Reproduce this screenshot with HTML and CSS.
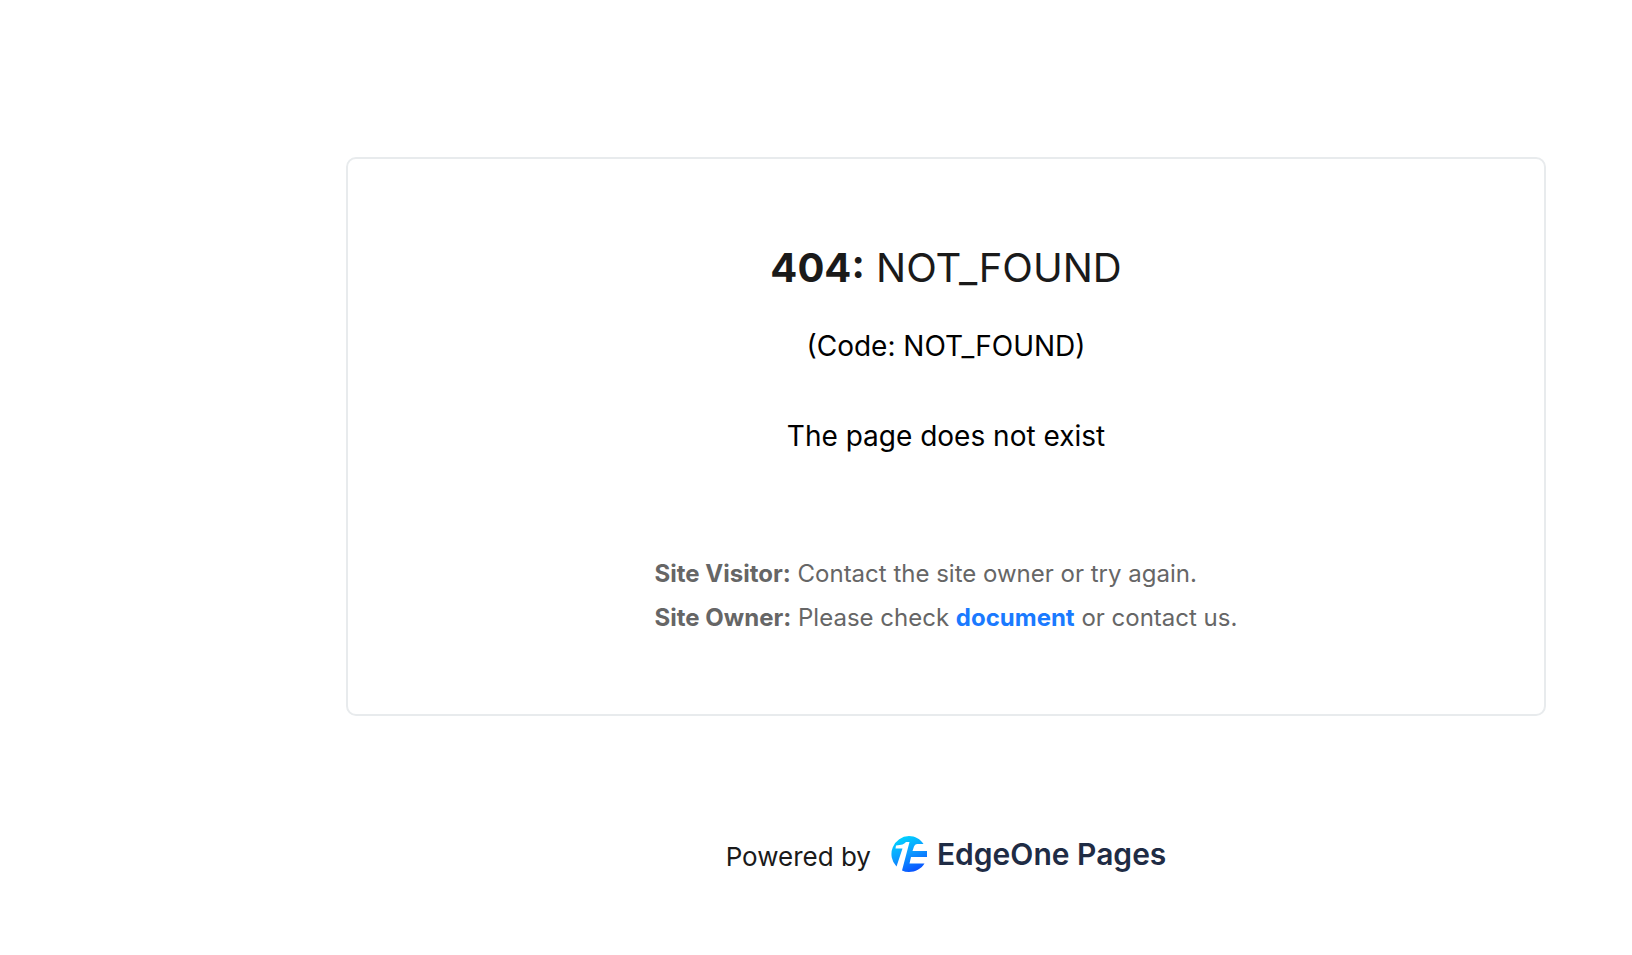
FILE: index.html
```html
<!DOCTYPE html>
<html lang="en">
<head>
<meta charset="utf-8">
<meta name="viewport" content="width=device-width, initial-scale=1">
<title>404: NOT_FOUND</title>
<link rel="stylesheet" href="styles.css">
</head>
<body>
<main class="card">
  <h1 class="title"><strong>404:</strong> NOT_FOUND</h1>
  <p class="code">(Code: NOT_FOUND)</p>
  <p class="message">The page does not exist</p>
  <div class="hints">
    <p class="hint"><strong>Site Visitor:</strong> Contact the site owner or try again.</p>
    <p class="hint"><strong>Site Owner:</strong> Please check <a class="link" href="#">document</a> or contact us.</p>
  </div>
</main>
<footer class="footer">
  <span class="powered">Powered by</span>
  <a class="brand" href="#">
    <svg class="logo" viewBox="0 0 36 36" aria-hidden="true">
      <defs>
        <linearGradient id="disc" x1="8" y1="0" x2="24" y2="36" gradientUnits="userSpaceOnUse">
          <stop offset="0" stop-color="#00d8ff"/>
          <stop offset="0.5" stop-color="#0c9cff"/>
          <stop offset="1" stop-color="#0a50ff"/>
        </linearGradient>
      </defs>
      <path fill="url(#disc)" d="M5.500 30.500A18 18 0 0 1 18 0C24 0 29.500 3 32.500 8H26Q23.800 8 23 10.500L21.500 15H36V21H20L18.500 27.500H33.500C30 33 24.500 36 18 36Q14 36 11 34.500L18.500 6H15Q13 9 5 9.500L4.500 12.500H11.500Z"/>
    </svg>
    <span class="brand-name">EdgeOne Pages</span>
  </a>
</footer>
</body>
</html>
```
FILE: styles.css
```css
* {
  box-sizing: border-box;
}

body {
  margin: 0;
  padding: 157px 86px 64px 346px;
  background: #fff;
  color: #000;
  font-family: Inter, "Liberation Sans", sans-serif;
}

.card {
  display: flex;
  flex-direction: column;
  align-items: center;
  max-width: 1200px;
  margin: 0 auto;
  padding: 81px 40px 74px;
  border: 2px solid #e8ebed;
  border-radius: 10px;
}

.title,
.code,
.message,
.hint {
  margin: 0;
}

.title {
  color: #1a1a1a;
  font-size: 40px;
  font-weight: 400;
  line-height: 56px;
}

.title strong {
  font-weight: 700;
}

.code,
.message {
  font-size: 28px;
  line-height: 40px;
}

.code {
  margin-top: 30px;
}

.message {
  margin-top: 50px;
}

.hints {
  margin-top: 96px;
  color: #666;
  font-size: 24px;
  line-height: 44px;
}

.hint strong {
  font-weight: 700;
}

.link {
  color: #1a7aff;
  font-weight: 700;
  text-decoration: none;
}

.footer {
  display: flex;
  justify-content: center;
  align-items: center;
  gap: 20px;
  margin-top: 117px;
}

.powered {
  padding-top: 6px;
  color: #1a1a1a;
  font-size: 26px;
  line-height: 36px;
}

.brand {
  display: flex;
  align-items: center;
  gap: 10px;
  color: #1f2c45;
  text-decoration: none;
}

.logo {
  width: 36px;
  height: 36px;
}

.brand-name {
  font-size: 30px;
  font-weight: 600;
  line-height: 36px;
}
```
